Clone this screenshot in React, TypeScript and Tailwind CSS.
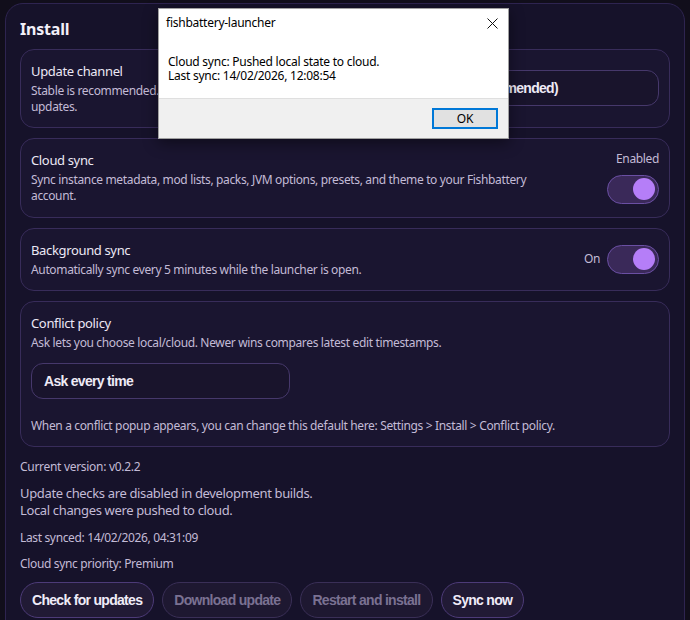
import React from "react";

const Toggle = () => (
  <div className="flex h-[29px] w-[52px] items-center justify-end rounded-full border border-[#6a4fa3] bg-[#3a2959] pr-[3px]">
    <div className="h-[22px] w-[22px] rounded-full bg-[#b57ef8]" />
  </div>
);

const SelectBox = ({ label, className = "" }: { label: string; className?: string }) => (
  <div
    className={`flex h-[36px] items-center rounded-[12px] border border-[#46386b] bg-[#19142c] pl-[12px] font-['Liberation_Sans',sans-serif] text-[14px] font-bold tracking-[-0.7px] text-[#eeeaf6] ${className}`}
  >
    {label}
  </div>
);

const Card = ({ children, className = "" }: { children: React.ReactNode; className?: string }) => (
  <div className={`rounded-[14px] border border-[#382c5a] bg-[#1a1530] px-[10px] pt-[11px] ${className}`}>
    {children}
  </div>
);

const Title = ({ children }: { children: React.ReactNode }) => (
  <div className="text-[13px] leading-[20px] tracking-[-0.35px] text-[#ece8f5]">{children}</div>
);

const Desc = ({ children, className = "" }: { children: React.ReactNode; className?: string }) => (
  <div className={`mt-[2px] text-[12px] leading-[16px] tracking-[-0.35px] text-[#c3bbd6] ${className}`}>{children}</div>
);

const ActionButton = ({ label, disabled }: { label: string; disabled?: boolean }) => (
  <button
    className={`h-[36px] rounded-full border px-[11px] font-['Liberation_Sans',sans-serif] text-[14px] font-bold tracking-[-0.7px] ${
      disabled
        ? "border-[#3a2f57] bg-[#1e1831] text-[#7a7192]"
        : "border-[#4d3b78] bg-[#211a35] text-[#f0ecf8]"
    }`}
  >
    {label}
  </button>
);

export default function App() {
  return (
    <div className="relative h-[620px] w-[690px] overflow-hidden bg-[#110e1b] font-['Noto_Sans',sans-serif]">
      <div className="ml-[5px] mt-[3px] w-[680px] rounded-[18px] border border-[#2e2450] bg-[#16122a] pb-8 pl-[14px] pr-[14px] pt-[15px]">
        <h2 className="text-[16px] font-bold leading-[20px] tracking-[-0.2px] text-[#f2eff8]">Install</h2>

        <div className="mt-[10px] flex flex-col gap-[10px]">
          <Card className="flex items-center justify-between gap-4 pb-[12px]">
            <div className="max-w-[350px] flex-1">
              <Title>Update channel</Title>
              <Desc>
                Stable is recommended. Beta gets new features and earlier
                <br />
                updates.
              </Desc>
            </div>
            <SelectBox label="Stable (recommended)" className="w-[251px]" />
          </Card>

          <Card className="flex items-center justify-between gap-4 pb-[13px]">
            <div className="max-w-[520px] flex-1">
              <Title>Cloud sync</Title>
              <Desc>
                Sync instance metadata, mod lists, packs, JVM options, presets, and theme to your Fishbattery account.
              </Desc>
            </div>
            <div className="flex flex-col items-end gap-[8px]">
              <span className="text-[12px] leading-[16px] tracking-[-0.35px] text-[#c3bbd6]">Enabled</span>
              <Toggle />
            </div>
          </Card>

          <Card className="flex items-center justify-between gap-4 pb-[12px]">
            <div className="flex-1">
              <Title>Background sync</Title>
              <Desc>Automatically sync every 5 minutes while the launcher is open.</Desc>
            </div>
            <div className="flex items-center gap-[7px]">
              <span className="text-[12px] leading-[16px] tracking-[-0.35px] text-[#c3bbd6]">On</span>
              <Toggle />
            </div>
          </Card>

          <Card className="pb-[12px]">
            <Title>Conflict policy</Title>
            <Desc>Ask lets you choose local/cloud. Newer wins compares latest edit timestamps.</Desc>
            <SelectBox label="Ask every time" className="mt-[12px] w-[259px]" />
            <Desc className="mt-[19px]">
              When a conflict popup appears, you can change this default here: Settings &gt; Install &gt; Conflict policy.
            </Desc>
          </Card>
        </div>

        <p className="mt-[11px] text-[12px] leading-[18px] tracking-[-0.3px] text-[#c3bbd6]">Current version: v0.2.2</p>
        <p className="mt-[9px] text-[13px] leading-[17px] tracking-[-0.35px] text-[#c3bbd6]">
          Update checks are disabled in development builds.
          <br />
          Local changes were pushed to cloud.
        </p>
        <p className="mt-[10px] text-[12px] leading-[18px] tracking-[-0.35px] text-[#c3bbd6]">
          Last synced: 14/02/2026, 04:31:09
        </p>
        <p className="mt-[8px] text-[12px] leading-[18px] tracking-[-0.35px] text-[#c3bbd6]">Cloud sync priority: Premium</p>

        <div className="mt-[9px] flex gap-[8px]">
          <ActionButton label="Check for updates" />
          <ActionButton label="Download update" disabled />
          <ActionButton label="Restart and install" disabled />
          <ActionButton label="Sync now" />
        </div>
      </div>

      {/* message box */}
      <div className="absolute left-[158px] top-[8px] flex h-[131px] w-[351px] flex-col border border-[#a0a0a0] bg-white font-['Noto_Sans',sans-serif] text-[12px] tracking-[-0.25px] text-black shadow-[0_4px_14px_rgba(0,0,0,0.45)]">
        <div className="flex h-[28px] items-center justify-between pl-[7px] pr-[10px]">
          <span>fishbattery-launcher</span>
          <svg width="11" height="11" viewBox="0 0 11 11">
            <path d="M0.5 0.5 L10.5 10.5 M10.5 0.5 L0.5 10.5" stroke="#111" strokeWidth="1" fill="none" />
          </svg>
        </div>
        <div className="flex-1 pl-[9px] pt-[18px] leading-[14px]">
          <div>Cloud sync: Pushed local state to cloud.</div>
          <div>Last sync: 14/02/2026, 12:08:54</div>
        </div>
        <div className="flex h-[40px] items-center justify-end border-t border-[#dfdfdf] bg-[#f0f0f0] pr-[10px]">
          <button className="flex h-[21px] w-[66px] items-center justify-center border-2 border-[#0078d7] bg-[#e1e1e1] text-[12px]">
            OK
          </button>
        </div>
      </div>
    </div>
  );
}
